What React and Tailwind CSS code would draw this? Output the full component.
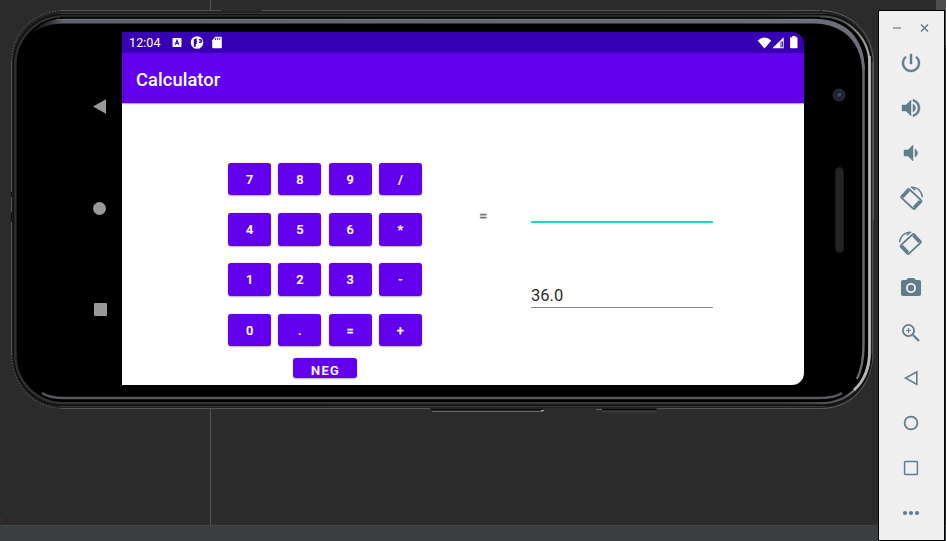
import React from "react";
import { MdPhotoCamera } from "react-icons/md";

const keys = ["7", "8", "9", "/", "4", "5", "6", "*", "1", "2", "3", "-", "0", ".", "=", "+"];

function Key({ label }) {
  return (
    <button className="flex h-[32.6px] w-[43.2px] items-center justify-center rounded-[3px] bg-[#6200ee] pt-[2px] text-[12.8px] font-medium leading-none tracking-[1px] text-white shadow-[0_0.5px_1.5px_rgba(0,0,0,0.3)] [-webkit-text-stroke:0.2px_white]">
      <span className="pl-[1px]">{label}</span>
    </button>
  );
}

// Metal rim and glass edge of the handset, drawn in window coordinates.
function PhoneBody() {
  return (
    <svg className="absolute left-[-11px] top-[-10px]" width="880" height="420" viewBox="0 0 880 420" fill="none">
      <defs>
        <linearGradient id="rim" x1="0" y1="0" x2="1" y2="0">
          <stop offset="0" stopColor="#303030" />
          <stop offset="0.9" stopColor="#38383a" />
          <stop offset="0.97" stopColor="#55575a" />
          <stop offset="1" stopColor="#a4a6a8" />
        </linearGradient>
        <linearGradient id="topEdge" x1="30" y1="0" x2="865" y2="0" gradientUnits="userSpaceOnUse">
          <stop offset="0" stopColor="#4a4d53" stopOpacity="0" />
          <stop offset="0.04" stopColor="#5d6068" />
          <stop offset="1" stopColor="#6d6f78" />
        </linearGradient>
      </defs>
      <rect x="12" y="11" width="861" height="397" rx="52" fill="#222" />
      <path d="M62 10.5H221M262 10.5H820M11.5 62V354M62 408.5H430M657 408.5H822" stroke="#555" />
      <path d="M62 10.5C32 12 12 32 11.5 62M11.5 354C13 386 32 407 62 408.5" stroke="#6a6a6a" strokeDasharray="1 2" />
      <path d="M822 10.5C853 12 873 34 873.5 64V220M873 354C871 388 850 408 822 408.5" stroke="#606060" />
      <rect x="13.5" y="14.5" width="858" height="391" rx="50" stroke="#111" strokeWidth="1.5" />
      <path d="M872.5 62V354" stroke="#4c4c4c" strokeWidth="1.6" />
      <rect x="15.5" y="16.5" width="854" height="386.5" rx="48" fill="#000" stroke="url(#rim)" strokeWidth="2.2" />
      <path d="M60 13.5H825M60 406.5H825" stroke="#373737" />
      <path d="M60 17.5H820" stroke="#020202" strokeWidth="1.6" />
      <path d="M29 38C36 25 48 18.8 64 18.8H814C846 18.8 864.6 38 865 70H862.2C861 43 845 24 814 23.4H64C49 23.4 38 27 29 38Z" fill="url(#topEdge)" />
      <path d="M56 19.5H815" stroke="#858890" strokeOpacity=".45" />
      <path d="M863.5 66V345C863.5 360 861 371 857 379" stroke="#696b72" strokeWidth="2.4" />
      <path d="M42 393C48 397 54 398 64 398H818C829 398 838 396 842 393" stroke="#57585e" strokeWidth="2.4" />
      <path d="M869.5 56V350C869.5 367 864 381 854 390" stroke="#b5b7ba" strokeWidth="2.6" />
      <path d="M431 409.5H543" stroke="#111" strokeWidth="1.5" />
      <path d="M432 411.5H543" stroke="#656565" />
      <path d="M541 410.5H544" stroke="#aaa" />
      <path d="M596 409.5H602" stroke="#666" />
      <path d="M602 409.5H656" stroke="#090909" strokeWidth="1.5" />
      <path d="M602 411.5H656" stroke="#3b3d3d" strokeWidth="2" />
      <path d="M11.5 192v5M11.5 212v10" stroke="#111" strokeWidth="1" />
    </svg>
  );
}

function StatusBar() {
  return (
    <div className="flex h-[21px] items-center bg-[#3700b3] pl-[7px] pr-[5px] text-white">
      <span className="w-[42.5px] pt-[2px] text-[12.6px] leading-none tracking-[0.05px]">12:04</span>
      <svg className="mt-[1px]" width="54" height="14" viewBox="0 0 54 14">
        <rect x=".5" y="2" width="9" height="9" rx=".8" fill="#fff" />
        <path d="M3.2 8.8 5 4.2l1.8 4.6M3.8 7.4h2.4" fill="none" stroke="#3700b3" strokeWidth="1.1" />
        <circle cx="25" cy="6.5" r="6.3" fill="#fff" />
        <path d="M21.8 3.6Q22.6 2.6 24.8 2.5v5.6h-1v2.7h-2ZM27 3h1.3a2 2 0 0 1 0 4H27Z" fill="#3700b3" />
        <circle cx="27.8" cy="5" r=".8" fill="#fff" />
        <path d="M43.4.7H48.8a1 1 0 0 1 1 1v9.6a1 1 0 0 1-1 1h-7.6a1 1 0 0 1-1-1V4.2Z" fill="#fff" />
        <path d="M43.6 2v2M45.7 2v2M47.8 2v2" stroke="#3700b3" strokeWidth=".9" />
      </svg>
      <svg className="ml-auto" width="42" height="14" viewBox="0 0 42 14">
        <path d="M.7 4.5Q7.5-1.7 14.3 4.5L7.5 12.5Z" fill="#fff" />
        <path d="M26.7 1.2V12.3H15.3Z" fill="#fff" />
        <path d="M23.4 5.6h2.4v5.7h-2.4Z" fill="#3700b3" />
        <path d="M24.2 6v5" stroke="#fff" strokeWidth=".7" />
        <path d="M35.3 0h3.2v1.2h1.2q.8 0 .8.8v9.5q0 .8-.8.8h-5.8q-.8 0-.8-.8V2q0-.8.8-.8h1.4Z" fill="#fff" />
      </svg>
    </div>
  );
}

function Calculator() {
  return (
    <main className="flex flex-1 overflow-hidden bg-white pl-[106px] text-[#757575]">
      <div className="flex w-[194px] flex-col items-center pt-[59.8px]">
        <div className="grid grid-cols-[repeat(4,43.2px)] gap-x-[7.1px] gap-y-[17.7px]">
          {keys.map((k) => (
            <Key key={k} label={k} />
          ))}
        </div>
        <button className="mt-[11.4px] flex h-[20.8px] w-[63.5px] shrink-0 justify-center overflow-hidden rounded-[3px] bg-[#6200ee] pl-[1px] pt-[5.5px] text-[12.8px] font-medium leading-[15px] tracking-[1.25px] text-white shadow-[0_0.5px_1.5px_rgba(0,0,0,0.3)] [-webkit-text-stroke:0.2px_white]">
          NEG
        </button>
      </div>
      <span className="ml-[57px] mt-[104.5px] w-[52px] text-[15px] font-medium leading-[16px] [-webkit-text-stroke:0.3px_#757575]">=</span>
      <div className="flex w-[182px] flex-col">
        <div className="h-[119.5px] border-b-2 border-[#1bd8c9]" />
        <div className="flex h-[85.4px] items-end border-b border-[#8b8b8b] pb-[2px] text-[16.5px] leading-[19px] text-[#2b2b2b]">36.0</div>
      </div>
    </main>
  );
}

function RotateIcon({ mirrored }) {
  return (
    <svg width="26" height="26" viewBox="0 0 26 26" fill="none" className={mirrored ? "-scale-x-100" : "mr-px"}>
      <g transform="rotate(43 13.3 14)" stroke="#607d8b">
        <rect x="4.2" y="8.2" width="18.2" height="11.6" rx="1.2" strokeWidth="1.9" />
        <path d="M5.5 9.5v9M21.1 9.5v9" strokeWidth="3" />
      </g>
      <path d="M12.8 2.4C19 1.7 23.9 6.2 24.4 12.2" stroke="#607d8b" strokeWidth="1.4" />
      <path d="m12.5 2 4.2 3.7 1-1-2.3-2.5Z" fill="#607d8b" />
    </svg>
  );
}

const outline = { fill: "none", stroke: "#607d8b" };

function Glyph({ d }) {
  return (
    <svg width="24" height="24" viewBox="0 0 24 24" fill="#607d8b" stroke="#607d8b" strokeWidth=".45">
      <path d={d} />
    </svg>
  );
}

const tools = [
  <Glyph d="M13 3h-2v10h2V3zm4.83 2.17l-1.42 1.42C17.99 7.86 19 9.81 19 12c0 3.87-3.13 7-7 7s-7-3.13-7-7c0-2.19 1.01-4.14 2.58-5.42L6.17 5.17C4.23 6.82 3 9.26 3 12c0 4.97 4.03 9 9 9s9-4.03 9-9c0-2.74-1.23-5.18-3.17-6.83z" />,
  <Glyph d="M3 9v6h4l5 5V4L7 9H3zm13.5 3c0-1.77-1.02-3.29-2.5-4.03v8.05c1.48-.73 2.5-2.25 2.5-4.02zM14 3.23v2.06c2.89.86 5 3.54 5 6.71s-2.11 5.85-5 6.71v2.06c4.01-.91 7-4.49 7-8.77s-2.99-7.86-7-8.77z" />,
  <Glyph d="M18.5 12c0-1.77-1.02-3.29-2.5-4.03v8.05c1.48-.73 2.5-2.25 2.5-4.02zM5 9v6h4l5 5V4L9 9H5z" />,
  <RotateIcon />,
  <RotateIcon mirrored />,
  <MdPhotoCamera size={24} />,
  <svg width="24" height="24" viewBox="0 0 24 24" {...outline}>
    <circle cx="9.5" cy="9.5" r="5.6" strokeWidth="1.8" />
    <path d="m14 14 6 6" strokeWidth="2.3" />
    <path d="M9.5 7v5M7 9.5h5" strokeWidth="1.2" />
  </svg>,
  <svg width="20" height="20"><path d="M15.8 3.8v12.6L4.6 10Z" {...outline} strokeWidth="1.6" /></svg>,
  <svg width="20" height="20"><circle cx="10" cy="10" r="6.4" {...outline} strokeWidth="1.7" /></svg>,
  <svg width="20" height="20"><rect x="3.6" y="3.6" width="12.8" height="12.8" rx=".8" {...outline} strokeWidth="1.5" /></svg>,
  <svg width="20" height="20" fill="#607d8b"><circle cx="4" cy="10" r="2.1" /><circle cx="10" cy="10" r="2.1" /><circle cx="16" cy="10" r="2.1" /></svg>,
];

function EmulatorToolbar() {
  return (
    <aside className="absolute left-[878px] top-[10px] flex h-[531px] w-[67px] flex-col border border-black bg-[#efefef] pr-[1px] text-[#607d8b]">
      <div className="flex h-[30px] items-center justify-between px-[14px] pt-[3px]">
        <svg width="8" height="10"><path d="M0 5h8" stroke="#9aadb5" strokeWidth="2" /></svg>
        <svg width="9" height="10"><path d="m1 1.5 7 7m0-7-7 7" stroke="#607d8b" strokeWidth="1.5" /></svg>
      </div>
      {tools.map((icon, i) => (
        <div key={i} className="flex h-[45px] shrink-0 items-center justify-center pb-[1px]">
          {icon}
        </div>
      ))}
    </aside>
  );
}

export default function App() {
  return (
    <div className="relative flex h-[541px] w-[946px] flex-col overflow-hidden bg-[#2b2b2b] font-[Roboto,sans-serif]">
      <div className="flex flex-1">
        <div className="flex w-[211px] items-end border-r border-[#555]">
          <span className="mb-[4px] h-[2px] w-[1px] bg-[#802525]" />
        </div>
        <div className="ml-auto flex w-[10px] flex-col">
          <span className="h-[45px] bg-[#4e4e4e]" />
        </div>
      </div>
      <footer className="h-[16px] border-t border-[#464646] bg-[#3c3f41]" />
      <section className="absolute left-[11px] top-[10px] flex h-[399px] w-[863px]">
        <PhoneBody />
        <nav className="relative flex w-[111px] flex-col items-end pr-[15px] pt-[89px]">
          <svg className="mr-[1px]" width="14" height="16"><path d="M14 .2v14.5L1 7.4Z" fill="#999" /></svg>
          <span className="mr-[1px] mt-[87px] h-[13px] w-[13px] rounded-full bg-[#999]" />
          <span className="mt-[88px] h-[13px] w-[13px] rounded-[1px] bg-[#999]" />
        </nav>
        <div className="relative mt-[22px] flex h-[353px] w-[682px] flex-col overflow-hidden rounded-r-[12px]">
          <StatusBar />
          <header className="z-10 flex h-[50px] items-center bg-[#6200ee] pl-[14px] pt-[3px] text-[18.3px] font-medium tracking-[0.1px] text-white shadow-[0_1px_1px_rgba(0,0,0,0.3)]">Calculator</header>
          <Calculator />
        </div>
        <div className="relative flex w-[70px] flex-col items-center pt-[78px]">
          <svg width="14" height="14">
            <circle cx="7" cy="7" r="6.5" fill="#28282a" />
            <circle cx="7" cy="7" r="3.8" fill="#1b2038" />
            <circle cx="7" cy="7" r="2.1" fill="#303d6d" />
            <circle cx="8" cy="6.4" r=".8" fill="#66759a" />
          </svg>
          <span className="mt-[65px] h-[86px] w-[9px] rounded-full border border-[#191919] bg-[#232525]" />
        </div>
      </section>
      <EmulatorToolbar />
    </div>
  );
}
